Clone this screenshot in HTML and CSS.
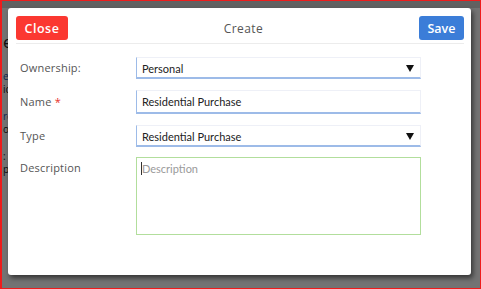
FILE: index.html
```html
<!DOCTYPE html>
<html lang="en">
<head>
    <meta charset="UTF-8">
    <meta name="viewport" content="width=device-width, initial-scale=1.0">
    <title>Create</title>
    <link rel="stylesheet" href="styles.css">
</head>
<body>
    <div class="frame">
        <!-- page behind the dialog, mostly hidden -->
        <div class="page">
            <div class="page-top"></div>
            <p class="page-title">e</p>
            <p class="page-link gap">e</p>
            <p class="page-text">ic</p>
            <p class="page-link gap">ro</p>
            <p class="page-text">or</p>
            <p class="page-text gap">:</p>
            <p class="page-text">p</p>
        </div>

        <div class="overlay"></div>

        <div class="modal">
            <div class="modal-header">
                <button type="button" class="btn btn-close">Close</button>
                <h1>Create</h1>
                <button type="button" class="btn btn-save">Save</button>
            </div>

            <form class="modal-form">
                <div class="row row-owner">
                    <label>Ownership:</label>
                    <div class="field select">Personal<span class="arrow"></span></div>
                </div>
                <div class="row row-name">
                    <label>Name <span class="req">*</span></label>
                    <div class="field input">Residential Purchase</div>
                </div>
                <div class="row row-type">
                    <label>Type</label>
                    <div class="field select">Residential Purchase<span class="arrow"></span></div>
                </div>
                <div class="row">
                    <label>Description</label>
                    <div class="field textarea"><span class="caret"></span><span class="placeholder">Description</span></div>
                </div>
            </form>
        </div>
    </div>
</body>
</html>
```

FILE: styles.css
```css
* {
    margin: 0;
    padding: 0;
    box-sizing: border-box;
}

html, body {
    width: 481px;
    height: 289px;
    overflow: hidden;
}

body {
    font-family: "Open Sans", Arial, sans-serif;
    background: #ffffff;
}

.frame {
    position: relative;
    width: 481px;
    height: 289px;
    border: 1px solid #ee1c1c;
    border-left-width: 2px;
    overflow: hidden;
}

/* background page */
.page-top {
    height: 7px;
    background: #d8d8d8;
}

.page p {
    font-size: 10px;
    line-height: 13px;
    color: #222;
    padding-left: 1px;
}

.page .page-title {
    font-size: 17px;
    line-height: 20px;
    margin-top: 24px;
}

.page .page-link {
    color: #2457b5;
}

.page .gap {
    margin-top: 14px;
}

.page .page-title + .gap {
    margin-top: 18px;
}

.overlay {
    position: absolute;
    inset: 0;
    background: rgba(0, 0, 0, 0.55);
}

/* dialog */
.modal {
    position: absolute;
    left: 6px;
    top: 7px;
    width: 463px;
    height: 267px;
    background: #fff;
    border-radius: 3px;
    box-shadow: 2px 3px 5px rgba(0, 0, 0, 0.55);
}

.modal-header {
    display: flex;
    align-items: center;
    justify-content: space-between;
    margin: 0 7px 0 8px;
    padding: 8px 0 3px;
    border-bottom: 1px solid #ececec;
}

.modal-header h1 {
    font-family: "Open Sans", Arial, sans-serif;
    font-size: 12px;
    font-weight: normal;
    color: #555;
    letter-spacing: 0.4px;
}

.btn {
    height: 24px;
    border: none;
    border-radius: 3px;
    color: #fff;
    font-family: "Open Sans", Arial, sans-serif;
    font-size: 12.5px;
    font-weight: 600;
    cursor: pointer;
}

.btn-close {
    width: 52px;
    background-color: #fb3831;
    letter-spacing: 0.5px;
}

.btn-save {
    width: 45px;
    background-color: #3b7dd8;
}

.modal-form {
    padding: 13px 0 0 12px;
}

.row {
    display: flex;
    align-items: flex-start;
}

.row label {
    width: 116px;
    font-size: 11px;
    color: #555;
    letter-spacing: 0.2px;
    line-height: 22px;
}

.req {
    color: #e8302a;
}

.field {
    position: relative;
    width: 285px;
    font-family: Lato, Arial, sans-serif;
    font-size: 11px;
    color: #222;
    padding-left: 5px;
}

.select {
    height: 22px;
    line-height: 21px;
    border: 1px solid #eef0f7;
    border-left-color: #9dbbe8;
    border-bottom: 2px solid #9dbbe8;
}

.input {
    height: 24px;
    line-height: 22px;
    border: 1px solid #eef0f7;
    border-left-color: #9dbbe8;
    border-bottom: 2px solid #9dbbe8;
}

.row-owner,
.row-name {
    margin-bottom: 11px;
}

.row-name label {
    line-height: 24px;
}

.row-type {
    margin-bottom: 10px;
}

.arrow {
    position: absolute;
    right: 6px;
    top: 7px;
    border-left: 4.5px solid transparent;
    border-right: 4.5px solid transparent;
    border-top: 7px solid #111;
}

.textarea {
    height: 78px;
    border: 1px solid #b2de9c;
    padding: 4px 4px;
    line-height: 14px;
}

.caret {
    display: inline-block;
    width: 1px;
    height: 13px;
    background: #333;
    vertical-align: -2px;
}

.placeholder {
    color: #9a9a9a;
}
```
